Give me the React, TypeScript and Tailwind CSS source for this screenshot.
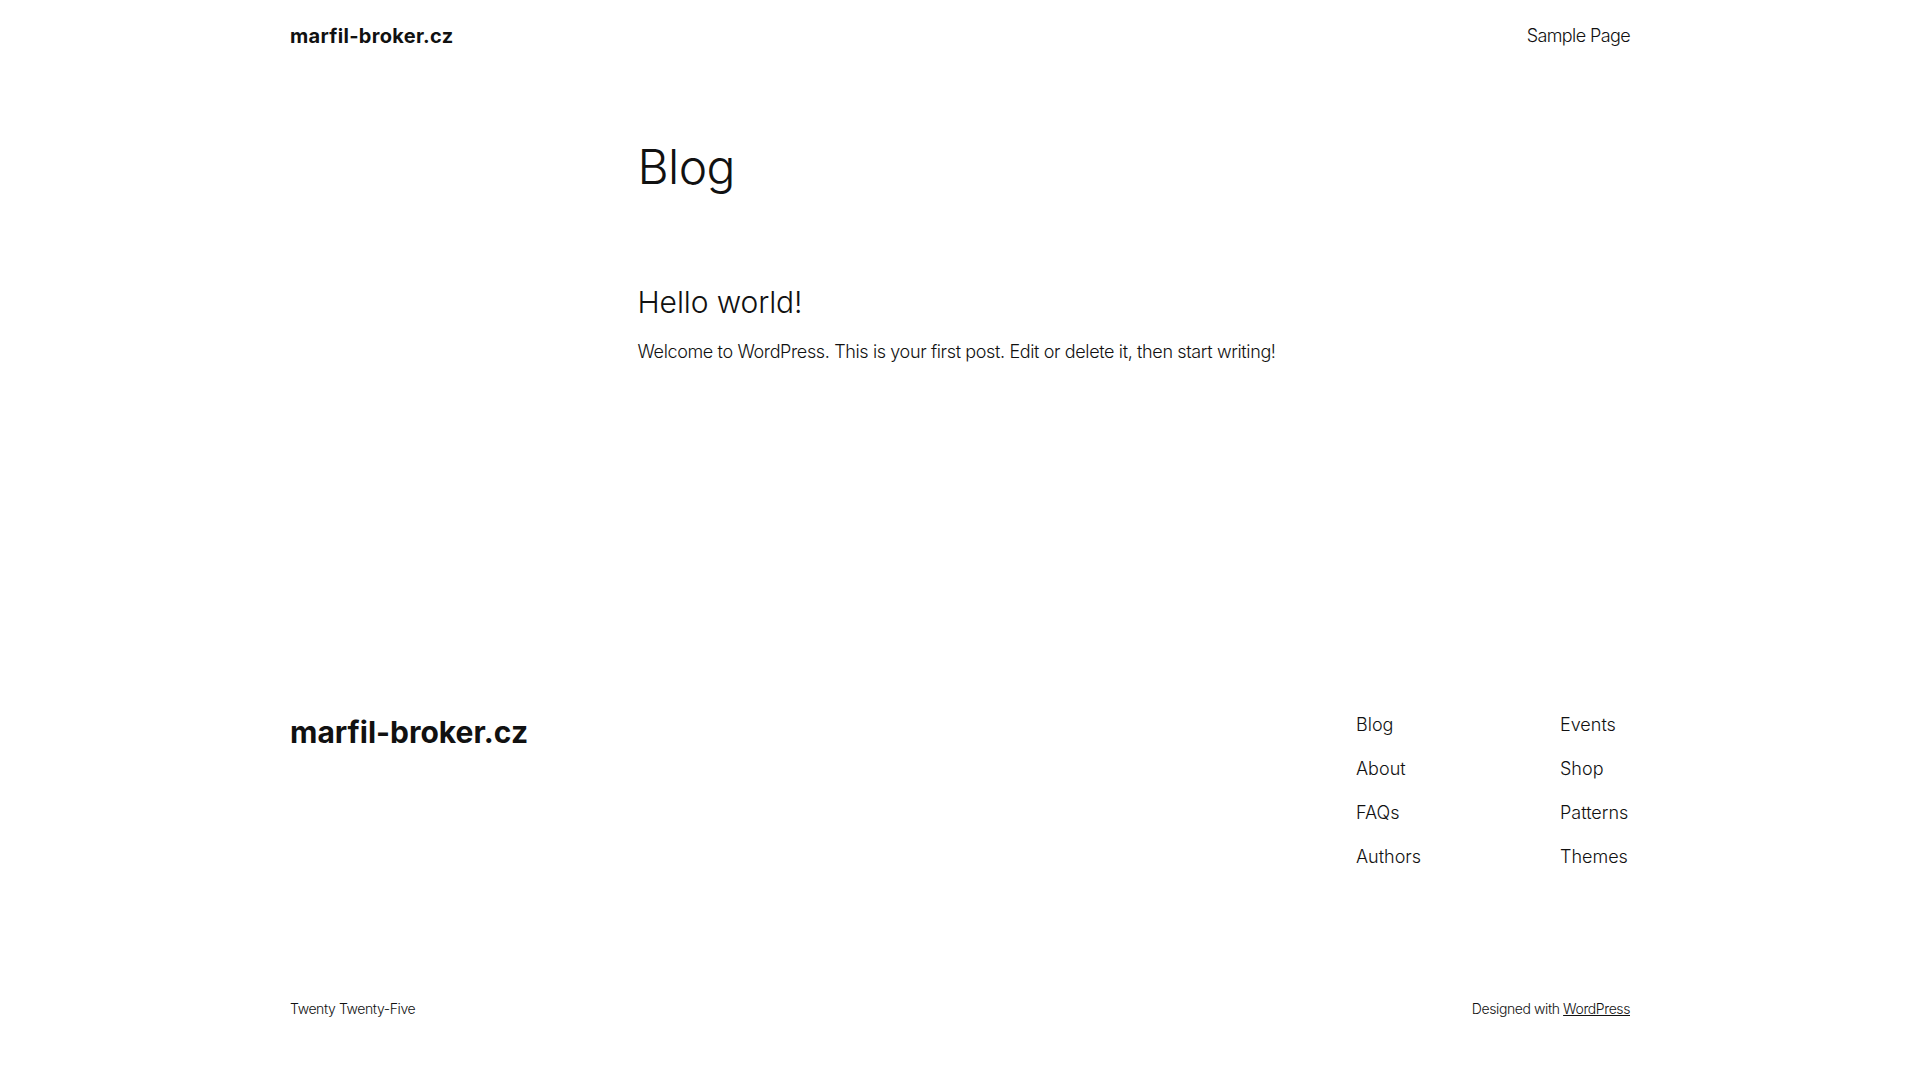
export default function App() {
  return (
    <div className="min-h-[1080px] bg-white text-[#111111] font-['Inter','Noto_Sans',sans-serif]">
      <header className="w-[1340px] mx-auto h-[72px] flex items-center justify-between">
        <a className="text-[20px] leading-[28px] font-bold tracking-[0.3px]">marfil-broker.cz</a>
        <nav>
          <a className="text-[18px] leading-[28px] font-light tracking-[-0.6px]">Sample Page</a>
        </nav>
      </header>
      <main className="w-[645px] mx-auto pt-[66px]">
        <h1 className="text-[48px] leading-[57.6px] font-light tracking-[-0.6px]">Blog</h1>
        <article className="mt-[88px]">
          <h2 className="text-[30px] leading-[36px] font-light tracking-[-0.1px]">Hello world!</h2>
          <p className="mt-[18px] text-[18px] leading-[28.8px] font-light tracking-[-0.37px] whitespace-nowrap">
            Welcome to WordPress. This is your first post. Edit or delete it, then start writing!
          </p>
        </article>
      </main>
      <footer className="w-[1340px] mx-auto mt-[345px]">
        <div className="flex justify-between items-start">
          <div className="pt-[3px] text-[30px] leading-[36px] font-bold tracking-[0px]">marfil-broker.cz</div>
          <div className="flex">
            <ul className="w-[204px] flex flex-col gap-[15.2px] text-[18px] leading-[28.8px] font-light">
              <li>Blog</li>
              <li>About</li>
              <li>FAQs</li>
              <li>Authors</li>
            </ul>
            <ul className="w-[70px] flex flex-col gap-[15.2px] text-[18px] leading-[28.8px] font-light">
              <li>Events</li>
              <li>Shop</li>
              <li>Patterns</li>
              <li>Themes</li>
            </ul>
          </div>
        </div>
        <div className="mt-[126px] flex justify-between text-[14px] leading-[22.4px] font-light tracking-[-0.4px]">
          <span>Twenty Twenty-Five</span>
          <span>
            Designed with <a className="underline">WordPress</a>
          </span>
        </div>
      </footer>
    </div>
  );
}
